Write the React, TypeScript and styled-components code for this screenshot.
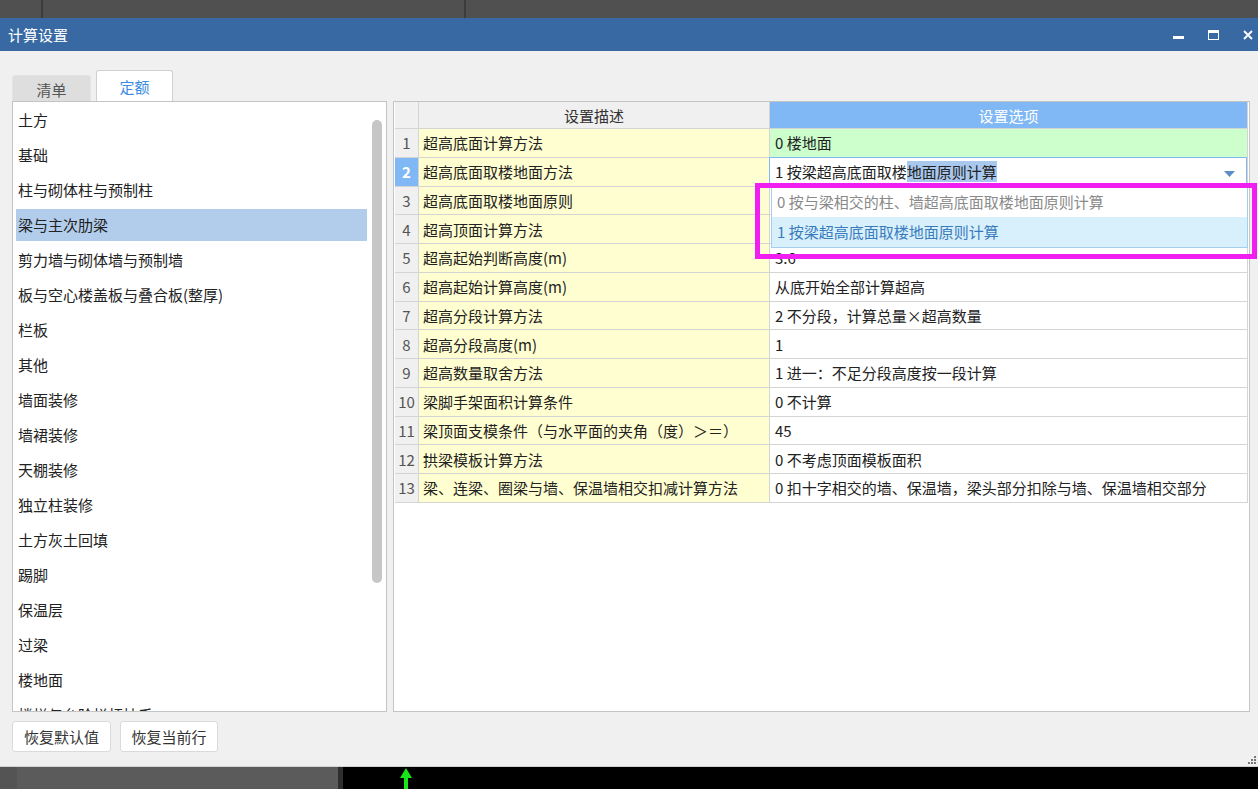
import styled, { createGlobalStyle } from "styled-components";

const GlobalStyle = createGlobalStyle`
	html, body {
		margin: 0;
		padding: 0;
		background: #000;
	}
	body {
		font-family: "Noto Sans CJK SC", "Microsoft YaHei", sans-serif;
		font-size: 15px;
		color: #222;
	}
	* {
		box-sizing: border-box;
	}
`;

const Screen = styled.div`
	width: 1258px;
	height: 789px;
	display: flex;
	flex-direction: column;
	overflow: hidden;
`;

const Strip = styled.div<{ $h: number }>`
	height: ${(p) => p.$h}px;
	flex: none;
	display: flex;
`;

const StripPane = styled.div<{ $w?: number; $bg: string; $line?: string }>`
	width: ${(p) => (p.$w ? `${p.$w}px` : "auto")};
	flex: ${(p) => (p.$w ? "none" : "1")};
	background: ${(p) => p.$bg};
	border-right: ${(p) => (p.$line ? `${p.$line}` : "none")};
	position: relative;
`;

const GreenArrow = styled.svg`
	position: absolute;
	left: 57px;
	top: 1px;
`;

const TitleBar = styled.div`
	height: 33px;
	flex: none;
	background: #3869a3;
	display: flex;
	align-items: center;
	padding-left: 8px;
	color: #fff;
	font-size: 15px;
`;

const Title = styled.span`
	flex: 1;
	line-height: 20px;
`;

const Controls = styled.div`
	display: flex;
	gap: 15px;
	align-items: center;
`;

const ControlBtn = styled.div`
	width: 20px;
	height: 20px;
	display: flex;
	align-items: center;
	justify-content: center;
`;

const Body = styled.div`
	flex: 1;
	background: #f0f0f0;
	border-bottom: 1px solid #d2d2d2;
	padding: 19px 2px 0 12px;
	display: flex;
	flex-direction: column;
`;

const Tabs = styled.div`
	height: 31px;
	display: flex;
	align-items: flex-end;
	gap: 5px;
`;

const Tab = styled.div<{ $active?: boolean; $w: number }>`
	width: ${(p) => p.$w}px;
	height: ${(p) => (p.$active ? 31 : 26)}px;
	background: ${(p) => (p.$active ? "#fff" : "#dedede")};
	border: 1px solid ${(p) => (p.$active ? "#d0d0d0" : "#e4e4e4")};
	border-bottom: none;
	border-radius: 3px 3px 0 0;
	color: ${(p) => (p.$active ? "#3b8be0" : "#555")};
	display: flex;
	align-items: center;
	justify-content: center;
	padding-top: ${(p) => (p.$active ? 1 : 2)}px;
`;

const Panels = styled.div`
	height: 611px;
	display: flex;
	gap: 6px;
	padding-right: 6px;
`;

const LeftPanel = styled.div`
	width: 375px;
	flex: none;
	background: #fff;
	border: 1px solid #c4c4c4;
	display: flex;
	overflow: hidden;
`;

const List = styled.div`
	flex: 1;
	padding: 2px 0 0 3px;
	overflow: hidden;
`;

const ListItem = styled.div<{ $selected?: boolean }>`
	height: 32px;
	margin-bottom: 3px;
	line-height: 32px;
	padding-left: 2px;
	white-space: nowrap;
	background: ${(p) => (p.$selected ? "#b2cdeb" : "transparent")};
`;

const ScrollTrack = styled.div`
	width: 19px;
	flex: none;
	padding: 18px 4px 0 5px;
`;

const ScrollThumb = styled.div`
	width: 10px;
	height: 463px;
	border-radius: 5px;
	background: #c6c6c6;
`;

const RightPanel = styled.div`
	flex: 1;
	background: #fff;
	border: 1px solid #c4c4c4;
	padding: 0 1px;
`;

const Grid = styled.div`
	display: grid;
	grid-template-columns: 24px 351px 478px;
`;

const Cell = styled.div<{ $bg?: string; $h?: number; $center?: boolean; $color?: string; $bold?: boolean; $pl?: number }>`
	height: ${(p) => p.$h ?? 28.75}px;
	background: ${(p) => p.$bg ?? "#fff"};
	border-right: 1px solid #d4d4d4;
	border-bottom: 1px solid #d4d4d4;
	display: flex;
	align-items: center;
	justify-content: ${(p) => (p.$center ? "center" : "flex-start")};
	padding-left: ${(p) => (p.$center ? 0 : p.$pl ?? 4)}px;
	color: ${(p) => p.$color ?? "#222"};
	font-weight: ${(p) => (p.$bold ? 700 : 400)};
	white-space: nowrap;
	position: relative;
`;

const Editor = styled.div`
	position: absolute;
	inset: -1px 0 -1px -1px;
	border: 1px solid #7fb8f5;
	background: #fff;
	display: flex;
	align-items: center;
	padding-left: 5px;
`;

const Selection = styled.span`
	background: #a9c8ed;
`;

const Caret = styled.svg`
	position: absolute;
	right: 11px;
	top: 13px;
`;

const Dropdown = styled.div`
	position: absolute;
	left: 1px;
	top: 28px;
	width: 477px;
	border: 1px solid #a4d0ee;
	background: #fff;
	z-index: 2;
`;

const Option = styled.div<{ $hover?: boolean }>`
	height: 30px;
	display: flex;
	align-items: center;
	padding-left: 5px;
	background: ${(p) => (p.$hover ? "#d8f0fb" : "#fff")};
	color: ${(p) => (p.$hover ? "#3a7bbe" : "#8a8a8a")};
`;

const Marker = styled.div`
	position: absolute;
	left: -15px;
	top: 25px;
	width: 502px;
	height: 76px;
	border: 5px solid #f01ef0;
	z-index: 3;
	pointer-events: none;
`;

const Footer = styled.div`
	flex: 1;
	display: flex;
	align-items: flex-start;
	gap: 9px;
	padding-top: 9px;
`;

const Button = styled.div<{ $w: number }>`
	width: ${(p) => p.$w}px;
	height: 31px;
	background: #fff;
	border: 1px solid #dadada;
	border-radius: 3px;
	display: flex;
	align-items: center;
	justify-content: center;
	color: #333;
`;

const Grip = styled.svg`
	margin-left: auto;
	align-self: flex-end;
	margin-bottom: 2px;
`;

const categories = [
	"土方",
	"基础",
	"柱与砌体柱与预制柱",
	"梁与主次肋梁",
	"剪力墙与砌体墙与预制墙",
	"板与空心楼盖板与叠合板(整厚)",
	"栏板",
	"其他",
	"墙面装修",
	"墙裙装修",
	"天棚装修",
	"独立柱装修",
	"土方灰土回填",
	"踢脚",
	"保温层",
	"过梁",
	"楼地面",
	"楼梯与台阶栏杆扶手",
];

// rows 3 and 4 sit under the open dropdown, so their values are not drawn
const rows = [
	{ desc: "超高底面计算方法", value: "0 楼地面" },
	{ desc: "超高底面取楼地面方法", value: "" },
	{ desc: "超高底面取楼地面原则", value: "" },
	{ desc: "超高顶面计算方法", value: "" },
	{ desc: "超高起始判断高度(m)", value: "3.6" },
	{ desc: "超高起始计算高度(m)", value: "从底开始全部计算超高" },
	{ desc: "超高分段计算方法", value: "2 不分段，计算总量×超高数量" },
	{ desc: "超高分段高度(m)", value: "1" },
	{ desc: "超高数量取舍方法", value: "1 进一：不足分段高度按一段计算" },
	{ desc: "梁脚手架面积计算条件", value: "0 不计算" },
	{ desc: "梁顶面支模条件（与水平面的夹角（度）＞＝）", value: "45" },
	{ desc: "拱梁模板计算方法", value: "0 不考虑顶面模板面积" },
	{ desc: "梁、连梁、圈梁与墙、保温墙相交扣减计算方法", value: "0 扣十字相交的墙、保温墙，梁头部分扣除与墙、保温墙相交部分" },
];

const App = () => {
	return (
		<Screen>
			<GlobalStyle />
			<Strip $h={18}>
				<StripPane $w={43} $bg="#505050" $line="2px solid #3c3c3c" />
				<StripPane $w={423} $bg="#505050" $line="2px solid #3c3c3c" />
				<StripPane $bg="#505050" />
			</Strip>
			<TitleBar>
				<Title>计算设置</Title>
				<Controls>
					<ControlBtn>
						<svg width="11" height="11" viewBox="0 0 11 11">
							<rect x="0" y="7" width="11" height="3" fill="#fff" />
						</svg>
					</ControlBtn>
					<ControlBtn>
						<svg width="11" height="10" viewBox="0 0 11 10">
							<rect x="0.5" y="0.5" width="10" height="9" fill="none" stroke="#fff" />
							<rect x="0" y="0" width="11" height="3" fill="#fff" />
						</svg>
					</ControlBtn>
					<ControlBtn>
						<svg width="10" height="10" viewBox="0 0 10 10">
							<path d="M1 1 L9 9 M9 1 L1 9" stroke="#fff" strokeWidth="1.8" />
						</svg>
					</ControlBtn>
				</Controls>
			</TitleBar>
			<Body>
				<Tabs>
					<Tab $w={79}>清单</Tab>
					<Tab $w={77} $active>
						定额
					</Tab>
				</Tabs>
				<Panels>
					<LeftPanel>
						<List>
							{categories.map((c) => (
								<ListItem key={c} $selected={c === "梁与主次肋梁"}>
									{c}
								</ListItem>
							))}
						</List>
						<ScrollTrack>
							<ScrollThumb />
						</ScrollTrack>
					</LeftPanel>
					<RightPanel>
						<Grid>
							<Cell $bg="#f0f0f0" $h={27} />
							<Cell $bg="#f0f0f0" $h={27} $center $color="#333">
								设置描述
							</Cell>
							<Cell $bg="#7fb8f5" $h={27} $center $color="#fff">
								设置选项
							</Cell>
							{rows.map((r, i) => {
								const current = i === 1;
								return [
									<Cell
										key={`n${i}`}
										$bg={current ? "#7fb8f5" : "#f0f0f0"}
										$center
										$color={current ? "#fff" : "#555"}
										$bold={current}
									>
										{i + 1}
									</Cell>,
									<Cell key={`d${i}`} $bg="#fffed0" $pl={4}>
										{r.desc}
									</Cell>,
									<Cell key={`v${i}`} $bg={i === 0 ? "#ccffcc" : "#fff"} $pl={5}>
										{current ? (
											<>
												<Editor>
													1 按梁超高底面取楼<Selection>地面原则计算</Selection>
													<Caret width="11" height="6" viewBox="0 0 11 6">
														<path d="M0 0 H11 L5.5 6 Z" fill="#5b8ec6" />
													</Caret>
												</Editor>
												<Dropdown>
													<Option>0 按与梁相交的柱、墙超高底面取楼地面原则计算</Option>
													<Option $hover>1 按梁超高底面取楼地面原则计算</Option>
												</Dropdown>
												<Marker />
											</>
										) : (
											r.value
										)}
									</Cell>,
								];
							})}
						</Grid>
					</RightPanel>
				</Panels>
				<Footer>
					<Button $w={99}>恢复默认值</Button>
					<Button $w={98}>恢复当前行</Button>
					<Grip width="8" height="8" viewBox="0 0 8 8">
						<rect x="6" y="0" width="2" height="2" fill="#777" />
						<rect x="3" y="3" width="2" height="2" fill="#777" />
						<rect x="6" y="3" width="2" height="2" fill="#777" />
						<rect x="0" y="6" width="2" height="2" fill="#777" />
						<rect x="3" y="6" width="2" height="2" fill="#777" />
						<rect x="6" y="6" width="2" height="2" fill="#777" />
					</Grip>
				</Footer>
			</Body>
			<Strip $h={22}>
				<StripPane $w={17} $bg="#545454" />
				<StripPane $w={326} $bg="#5b5b5b" $line="5px solid #2e2e2e" />
				<StripPane $bg="#000">
					<GreenArrow width="12" height="21" viewBox="0 0 12 21">
						<path d="M6 0 L12 10 H8 V21 H4 V10 H0 Z" fill="#19e619" />
					</GreenArrow>
				</StripPane>
			</Strip>
		</Screen>
	);
};

export default App;
